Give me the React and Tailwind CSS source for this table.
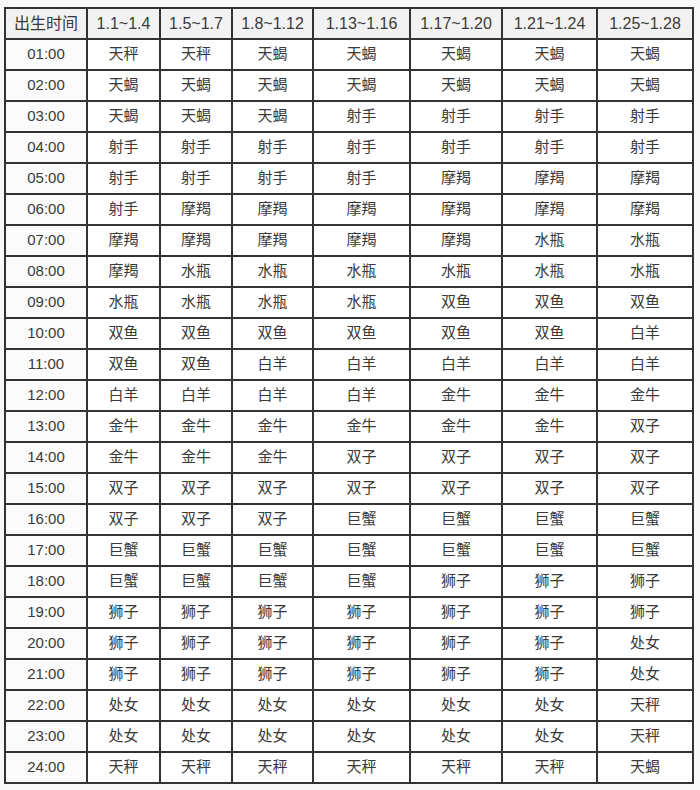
const cols = ["1.1~1.4", "1.5~1.7", "1.8~1.12", "1.13~1.16", "1.17~1.20", "1.21~1.24", "1.25~1.28"];
const widths = ["w-[82px]", "w-[73px]", "w-[72px]", "w-[81px]", "w-[97px]", "w-[92px]", "w-[95px]", "w-[96px]"];

const r = (s) => s.split(" ");

const rows = [
  ["01:00", r("天秤 天秤 天蝎 天蝎 天蝎 天蝎 天蝎")],
  ["02:00", r("天蝎 天蝎 天蝎 天蝎 天蝎 天蝎 天蝎")],
  ["03:00", r("天蝎 天蝎 天蝎 射手 射手 射手 射手")],
  ["04:00", r("射手 射手 射手 射手 射手 射手 射手")],
  ["05:00", r("射手 射手 射手 射手 摩羯 摩羯 摩羯")],
  ["06:00", r("射手 摩羯 摩羯 摩羯 摩羯 摩羯 摩羯")],
  ["07:00", r("摩羯 摩羯 摩羯 摩羯 摩羯 水瓶 水瓶")],
  ["08:00", r("摩羯 水瓶 水瓶 水瓶 水瓶 水瓶 水瓶")],
  ["09:00", r("水瓶 水瓶 水瓶 水瓶 双鱼 双鱼 双鱼")],
  ["10:00", r("双鱼 双鱼 双鱼 双鱼 双鱼 双鱼 白羊")],
  ["11:00", r("双鱼 双鱼 白羊 白羊 白羊 白羊 白羊")],
  ["12:00", r("白羊 白羊 白羊 白羊 金牛 金牛 金牛")],
  ["13:00", r("金牛 金牛 金牛 金牛 金牛 金牛 双子")],
  ["14:00", r("金牛 金牛 金牛 双子 双子 双子 双子")],
  ["15:00", r("双子 双子 双子 双子 双子 双子 双子")],
  ["16:00", r("双子 双子 双子 巨蟹 巨蟹 巨蟹 巨蟹")],
  ["17:00", r("巨蟹 巨蟹 巨蟹 巨蟹 巨蟹 巨蟹 巨蟹")],
  ["18:00", r("巨蟹 巨蟹 巨蟹 巨蟹 狮子 狮子 狮子")],
  ["19:00", r("狮子 狮子 狮子 狮子 狮子 狮子 狮子")],
  ["20:00", r("狮子 狮子 狮子 狮子 狮子 狮子 处女")],
  ["21:00", r("狮子 狮子 狮子 狮子 狮子 狮子 处女")],
  ["22:00", r("处女 处女 处女 处女 处女 处女 天秤")],
  ["23:00", r("处女 处女 处女 处女 处女 处女 天秤")],
  ["24:00", r("天秤 天秤 天秤 天秤 天秤 天秤 天蝎")],
];

export default function App() {
  return (
    <div className="w-[700px] h-[790px] bg-[#f8f8f8] pt-[7px] pl-[4px] font-['Liberation_Sans','Noto_Sans_CJK_SC',sans-serif] text-[#3a3a3a]">
      <table className="table-fixed border-collapse border-2 border-[#333] bg-white w-[690px]">
        <thead>
          <tr className="h-[31px] bg-[#f2f2f2] text-[16px]">
            <th className={"font-normal border-2 border-[#333] " + widths[0]}>出生时间</th>
            {cols.map((c, i) => (
              <th key={c} className={"font-normal border-2 border-[#333] " + widths[i + 1]}>
                {c}
              </th>
            ))}
          </tr>
        </thead>
        <tbody>
          {rows.map(([t, signs]) => (
            <tr key={t} className="h-[31px] text-[15px]">
              <td className="text-center border-2 border-[#333] bg-[#fbfbfb]">{t}</td>
              {signs.map((s, i) => (
                <td key={i} className="text-center border-2 border-[#333]">
                  {s}
                </td>
              ))}
            </tr>
          ))}
        </tbody>
      </table>
    </div>
  );
}
